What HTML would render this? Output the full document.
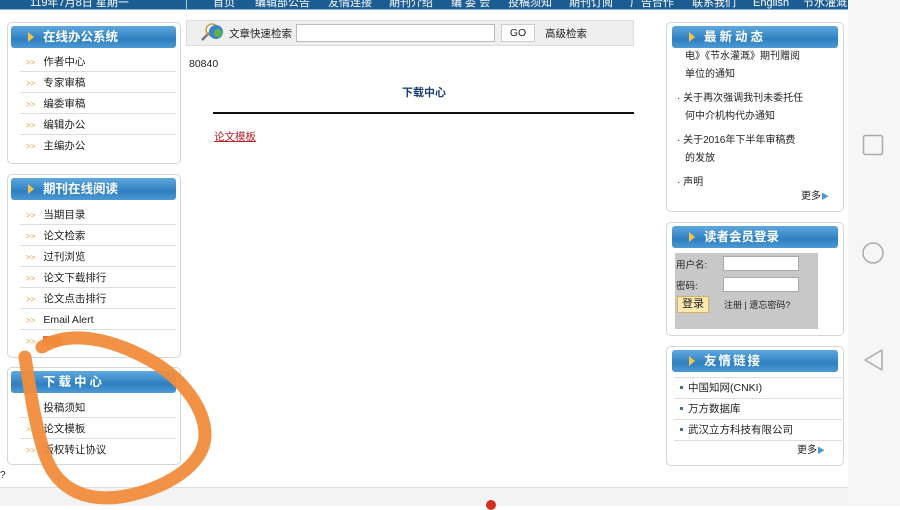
<!DOCTYPE html>
<html><head><meta charset="utf-8"><style>
*{margin:0;padding:0;box-sizing:border-box}
body{width:900px;height:506px;overflow:hidden;background:#fff;font-family:"Liberation Sans","Noto Sans CJK SC",sans-serif;font-size:11px;color:#222;position:relative}
.abs{position:absolute}
.nav{left:0;top:0;width:848px;height:10px;background:#1b5c92;color:#fff;font-size:11px;line-height:8px;white-space:nowrap;overflow:hidden;border-bottom:1px solid #7fb3d8}
.nav span{position:absolute;top:-1px}
.panel{border:1px solid #d6d6d6;border-radius:5px;background:#fff}
.hd{position:absolute;height:22px;border-radius:3px;background:linear-gradient(#5fa8de,#2f80c0 60%,#4d9bd5);color:#fff;font-weight:bold;font-size:12.5px;line-height:22px}
.hd:before{content:"";position:absolute;left:17px;top:6px;border-left:6px solid #f5c24a;border-top:5px solid transparent;border-bottom:5px solid transparent}
.item{position:absolute;left:20px;width:156px;height:21px;border-bottom:1px solid #ddd;line-height:22px;font-size:10.5px}
.item b{color:#d9a53a;font-weight:normal;font-size:8px;margin-right:8px;margin-left:6px}
.ritem{position:absolute;font-size:10px;line-height:18px;color:#222}
.lk{position:absolute;left:8px;width:168px;height:21px;border-bottom:1px solid #ddd;line-height:21px;font-size:10.5px}
.lk i{display:inline-block;width:3px;height:3px;background:#3a70a8;margin:0 5px 2px 6px;vertical-align:middle}
</style></head><body>
<div class="abs nav">
<span style="left:30px">119年7月8日 星期一</span>
<div style="position:absolute;left:186px;top:0;width:1px;height:10px;background:#9cc"></div>
<span style="left:213px">首页</span><span style="left:255px">编辑部公告</span><span style="left:328px">友情连接</span><span style="left:389px">期刊介绍</span><span style="left:451px">编 委 会</span><span style="left:508px">投稿须知</span><span style="left:569px">期刊订阅</span><span style="left:630px">广告合作</span><span style="left:692px">联系我们</span><span style="left:753px">English</span><span style="left:803px">节水灌溉</span>
</div>
<div class="abs panel" style="left:7px;top:22px;width:174px;height:142px"></div>
<div class="hd" style="left:11px;top:26px;width:165px;padding-left:32px">在线办公系统</div>
<div class="item" style="top:51px"><b>&gt;&gt;</b>作者中心</div>
<div class="item" style="top:72px"><b>&gt;&gt;</b>专家审稿</div>
<div class="item" style="top:93px"><b>&gt;&gt;</b>编委审稿</div>
<div class="item" style="top:114px"><b>&gt;&gt;</b>编辑办公</div>
<div class="item" style="top:135px;border:none"><b>&gt;&gt;</b>主编办公</div>
<div class="abs panel" style="left:7px;top:174px;width:174px;height:184px"></div>
<div class="hd" style="left:11px;top:178px;width:165px;padding-left:32px">期刊在线阅读</div>
<div class="item" style="top:204px"><b>&gt;&gt;</b>当期目录</div>
<div class="item" style="top:225px"><b>&gt;&gt;</b>论文检索</div>
<div class="item" style="top:246px"><b>&gt;&gt;</b>过刊浏览</div>
<div class="item" style="top:267px"><b>&gt;&gt;</b>论文下载排行</div>
<div class="item" style="top:288px"><b>&gt;&gt;</b>论文点击排行</div>
<div class="item" style="top:309px"><b>&gt;&gt;</b>Email Alert</div>
<div class="item" style="top:330px;border:none"><b>&gt;&gt;</b><span style="background:#e8702a;color:#e8702a;font-size:9px">RSS</span></div>
<div class="abs panel" style="left:7px;top:367px;width:174px;height:98px"></div>
<div class="hd" style="left:11px;top:371px;width:165px;padding-left:32px;letter-spacing:3px">下载中心</div>
<div class="item" style="top:397px"><b>&gt;&gt;</b>投稿须知</div>
<div class="item" style="top:418px"><b>&gt;&gt;</b>论文模板</div>
<div class="item" style="top:439px;border:none"><b>&gt;&gt;</b>版权转让协议</div>
<div class="abs" style="left:0;top:470px;font-size:10px">?</div>
<div class="abs" style="left:186px;top:20px;width:448px;height:26px;background:#efefef;border:1px solid #ddd"></div>
<svg class="abs" style="left:199px;top:21px" width="28" height="22"><line x1="3" y1="19" x2="10" y2="12" stroke="#777" stroke-width="2.5"/><circle cx="13" cy="9" r="6" fill="none" stroke="#c9a040" stroke-width="1.5"/><circle cx="17" cy="11" r="7" fill="#3b86c8"/><circle cx="19" cy="12" r="4" fill="#5fb24a"/></svg>
<div class="abs" style="left:229px;top:26px;font-size:10.5px">文章快速检索</div>
<div class="abs" style="left:296px;top:24px;width:199px;height:18px;background:#fff;border:1px solid #bbb"></div>
<div class="abs" style="left:501px;top:24px;width:34px;height:18px;background:#fff;border:1px solid #ccc;text-align:center;line-height:16px;font-size:10.5px">GO</div>
<div class="abs" style="left:545px;top:26px;font-size:10.5px">高级检索</div>
<div class="abs" style="left:189px;top:58px;font-size:10.5px">80840</div>
<div class="abs" style="left:402px;top:84px;font-size:11px;font-weight:bold;color:#1e3f78">下载中心</div>
<div class="abs" style="left:213px;top:112px;width:421px;height:2px;background:#111"></div>
<div class="abs" style="left:214px;top:129px;font-size:10.5px;color:#b8202a;text-decoration:underline">论文模板</div>
<div class="abs panel" style="left:666px;top:22px;width:178px;height:190px"></div>
<div class="hd" style="left:672px;top:26px;width:166px;padding-left:32px;letter-spacing:3px">最新动态</div>
<div class="ritem" style="left:685px;top:48px">电》《节水灌溉》期刊赠阅</div>
<div class="ritem" style="left:685px;top:66px">单位的通知</div>
<div class="ritem" style="left:677px;top:90px">· 关于再次强调我刊未委托任</div>
<div class="ritem" style="left:685px;top:108px">何中介机构代办通知</div>
<div class="ritem" style="left:677px;top:132px">· 关于2016年下半年审稿费</div>
<div class="ritem" style="left:685px;top:150px">的发放</div>
<div class="ritem" style="left:677px;top:174px">· 声明</div>
<div class="ritem" style="left:801px;top:188px">更多<span style="color:#4a9ad8;font-size:8px">▶</span></div>
<div class="abs panel" style="left:666px;top:222px;width:178px;height:114px"></div>
<div class="hd" style="left:672px;top:226px;width:166px;padding-left:32px">读者会员登录</div>
<div class="abs" style="left:675px;top:253px;width:143px;height:76px;background:#c8c8c8"></div>
<div class="abs" style="left:676px;top:257px;font-size:9.5px">用户名:</div>
<div class="abs" style="left:723px;top:256px;width:76px;height:15px;background:#fff;border:1px solid #aaa"></div>
<div class="abs" style="left:676px;top:278px;font-size:9.5px">密码:</div>
<div class="abs" style="left:723px;top:277px;width:76px;height:15px;background:#fff;border:1px solid #aaa"></div>
<div class="abs" style="left:677px;top:296px;width:32px;height:17px;background:#fbe8b0;border:1px solid #d8b060;font-size:11px;text-align:center;line-height:15px">登录</div>
<div class="abs" style="left:724px;top:298px;font-size:9px">注册 | 遗忘密码?</div>
<div class="abs panel" style="left:666px;top:346px;width:178px;height:120px"></div>
<div class="hd" style="left:672px;top:350px;width:166px;padding-left:32px;letter-spacing:2px">友情链接</div>
<div class="abs" style="left:674px;top:377px;width:168px;height:1px;background:#ddd"></div>
<div class="lk" style="left:674px;top:378px"><i></i>中国知网(CNKI)</div>
<div class="lk" style="left:674px;top:399px"><i></i>万方数据库</div>
<div class="lk" style="left:674px;top:420px"><i></i>武汉立方科技有限公司</div>
<div class="ritem" style="left:797px;top:442px">更多<span style="color:#4a9ad8;font-size:8px">▶</span></div>
<div class="abs" style="left:0;top:487px;width:848px;height:19px;background:#f3f3f3;border-top:1px solid #ddd"></div>
<div class="abs" style="left:486px;top:500px;width:10px;height:10px;border-radius:50%;background:#d03020"></div>
<div class="abs" style="left:848px;top:0;width:52px;height:506px;background:#f6f6f6"></div>
<svg class="abs" style="left:848px;top:0" width="52" height="506"><rect x="15.5" y="135.5" width="19" height="19" rx="2" fill="none" stroke="#aaa" stroke-width="1.5"/><circle cx="25" cy="253" r="10" fill="none" stroke="#aaa" stroke-width="1.5"/><path d="M34 350 L17 360 L34 370 Z" fill="none" stroke="#aaa" stroke-width="1.5" stroke-linejoin="round"/></svg>
<svg class="abs" style="left:0;top:0" width="900" height="506"><path d="M42 347 C70 330 110 338 150 360 C185 380 205 410 205 435 C205 465 165 490 120 497 C80 502 55 485 45 455 C35 425 30 390 25 357" fill="none" stroke="#f08c3c" stroke-width="13" stroke-linecap="round" opacity="0.95"/></svg>
</body></html>
